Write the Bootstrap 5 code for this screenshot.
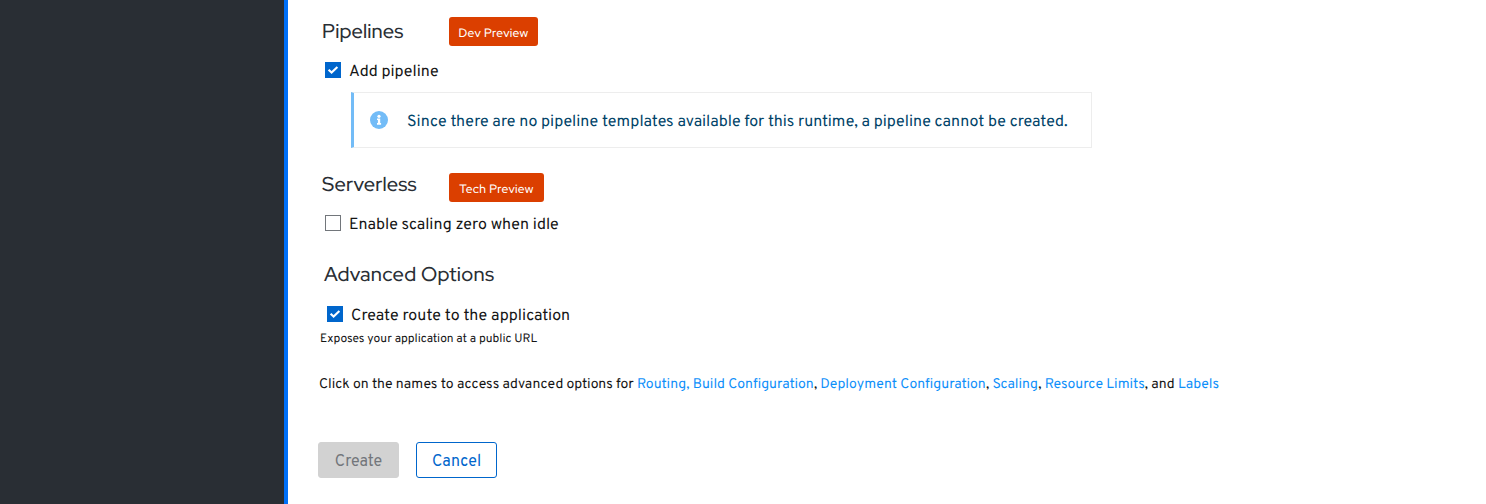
<!DOCTYPE html>
<html lang="en">
<head>
<meta charset="utf-8">
<meta name="viewport" content="width=device-width, initial-scale=1">
<title>Pipelines and advanced options</title>
<link href="https://cdn.jsdelivr.net/npm/bootstrap@5.3.0/dist/css/bootstrap.min.css" rel="stylesheet">
<style>
body{font-family:Overpass,Roboto,sans-serif;font-size:16px;color:#151515;height:504px;overflow:hidden;background:#fff;text-rendering:geometricPrecision}
.side{width:288px;background:#292e34;border-right:4px solid #0070f8}
.main{padding:17px 0 0 30px}
.title{font-family:"Red Hat Display",Lato,sans-serif;font-size:20px;height:28px;line-height:30px;font-weight:500;letter-spacing:.1px;color:#292e34;margin:0;white-space:nowrap}
.title-wide{letter-spacing:.27px}
.title-col{width:127px}
.tag{font-family:"Red Hat Display",Inter,sans-serif;font-size:12px;line-height:1;font-weight:500;letter-spacing:.3px;height:29px;background:#db3f00;border-radius:3px;padding:2px 0 0}
.form-check{min-height:0;height:20px;gap:8px}
.form-check-label{padding-top:5px;line-height:20px}
.form-check .form-check-input{width:16px;height:16px;margin:0;float:none;border:1px solid #72767b;border-radius:0}
.form-check .form-check-input:checked{background-color:#06c;border-color:#06c;background-size:12px 12px;background-image:url("data:image/svg+xml,%3Csvg xmlns='http://www.w3.org/2000/svg' viewBox='0 0 12 12'%3E%3Cpath d='M1.6 5.7 4.6 8.6 10.4 2.9' fill='none' stroke='%23fff' stroke-width='2.1'/%3E%3C/svg%3E")}
.notice{width:741px;height:56px;margin:12px 0 0 33px;padding:0 0 0 16px;border:1px solid #ededed;border-left:3px solid #73bcf7;border-radius:0;color:#004368;gap:19px}
.notice span{padding-top:6px}
.links{font-size:14px;line-height:20px;margin:29px 0 0 1px;white-space:nowrap}
.links a{color:#0f90fa;text-decoration:none}
.hint{font-size:12px;line-height:16px;margin:7px 0 0 2px}
.act{width:81px;height:36px;padding:4px 0 0;border-radius:3px;font-size:16px;line-height:1}
.act:disabled{background:#d2d2d2;border-color:#d2d2d2;color:#72767b;opacity:1}
.act-line{color:#06c;border-color:#06c}
</style>
</head>
<body class="d-flex">
<aside class="side flex-shrink-0"></aside>
<main class="main flex-grow-1">
  <section>
    <div class="d-flex" style="padding-left:4px">
      <div class="title-col"><h2 class="title">Pipelines</h2></div>
      <span class="tag badge d-flex align-items-center justify-content-center" style="width:89px">Dev Preview</span>
    </div>
    <div class="form-check d-flex align-items-center p-0 mb-0" style="margin:14px 0 0 7px">
      <input class="form-check-input" type="checkbox" id="pipe" checked><label class="form-check-label" for="pipe">Add pipeline</label>
    </div>
    <div class="notice alert d-flex align-items-center mb-0" role="alert">
      <svg width="18" height="18" viewBox="0 0 18 18" aria-hidden="true"><circle cx="9" cy="9" r="9" fill="#73bcf7"/><circle cx="9" cy="5.3" r="1.6" fill="#fff"/><path d="M7 7.5h3.2v4.6h.9v1.6H7v-1.6h.9V9.1H7z" fill="#fff"/></svg>
      <span>Since there are no pipeline templates available for this runtime, a pipeline cannot be created.</span>
    </div>
  </section>
  <section style="margin-top:25px">
    <div class="d-flex" style="padding-left:4px">
      <div class="title-col"><h2 class="title" style="margin-top:-3px">Serverless</h2></div>
      <span class="tag badge d-flex align-items-center justify-content-center" style="width:95px">Tech Preview</span>
    </div>
    <div class="form-check d-flex align-items-center p-0 mb-0" style="margin:11px 0 0 7px">
      <input class="form-check-input" type="checkbox" id="idle"><label class="form-check-label" for="idle">Enable scaling zero when idle</label>
    </div>
  </section>
  <section style="margin-top:27px">
    <h2 class="title title-wide" style="margin-left:6px">Advanced Options</h2>
    <div class="form-check d-flex align-items-center p-0 mb-0" style="margin:16px 0 0 9px">
      <input class="form-check-input" type="checkbox" id="route" checked><label class="form-check-label" for="route" style="letter-spacing:.05px">Create route to the application</label>
    </div>
    <p class="hint">Exposes your application at a public URL</p>
    <p class="links">Click on the names to access advanced options for <a href="#">Routing,</a> <a href="#">Build Configuration</a>, <a href="#">Deployment Configuration</a>, <a href="#">Scaling</a>, <a href="#">Resource Limits</a>, and <a href="#">Labels</a></p>
  </section>
  <div class="d-flex" style="gap:17px;margin-top:46px">
    <button class="btn act" type="button" disabled>Create</button>
    <button class="btn act act-line" type="button">Cancel</button>
  </div>
</main>
<script src="https://cdn.jsdelivr.net/npm/bootstrap@5.3.0/dist/js/bootstrap.bundle.min.js"></script>
</body>
</html>
